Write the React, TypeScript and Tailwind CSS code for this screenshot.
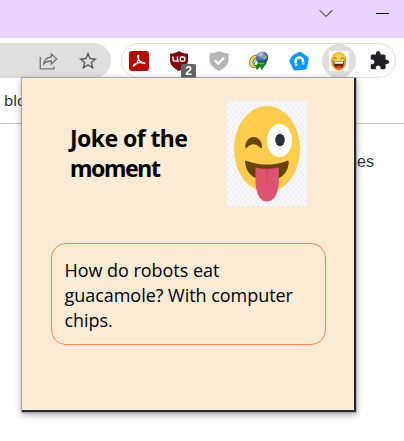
import React from "react";

function ShareIcon() {
  return (
    <svg width="20" height="20" viewBox="0 0 20 20" fill="none" stroke="#737377" strokeWidth="1.3" strokeLinejoin="miter">
      <path d="M2.3 6V17.800H16V15.500" />
      <path d="M13.300 2.900L18.600 7.900L13.300 12.900V10C9.500 10 7.500 11 5.700 13.100C6.300 9 8.900 6.200 13.300 5.800Z" />
    </svg>
  );
}

function StarIcon() {
  return (
    <svg width="22" height="22" viewBox="0 0 24 24" fill="#5f6062">
      <path d="M22 9.240l-7.190-.620L12 2 9.190 8.630 2 9.240l5.460 4.730L5.820 21 12 17.270 18.180 21l-1.630-7.030L22 9.240zM12 15.400l-3.760 2.270 1-4.280-3.320-2.880 4.380-.380L12 6.100l1.710 4.040 4.380.380-3.320 2.880 1 4.280L12 15.400z" />
    </svg>
  );
}

function PdfIcon() {
  return (
    <svg width="20" height="20" viewBox="0 0 20 20">
      <rect width="20" height="20" rx="3.200" fill="#b50b02" />
      <path d="M4.300 15.200C7.500 14 10.300 8.600 9.500 4.800C9.200 4 8.500 4.700 8.800 6C9.500 9.300 12.400 12.600 15.700 12.400C16.300 11.100 11 10.800 7 12.500C5.300 13.200 3.900 14.500 4.300 15.200Z" fill="none" stroke="#fff" strokeWidth="1.300" strokeLinejoin="round" />
    </svg>
  );
}

function BlockerIcon() {
  return (
    <svg width="20" height="20" viewBox="0 0 20 20">
      <path d="M10 0C7.500 2 4.200 2.700 1 2.800V9C1 14 4.500 17.200 10 20C15.500 17.200 19 14 19 9V2.800C15.800 2.700 12.500 2 10 0Z" fill="#800610" />
      <path d="M4 5.500V8.300Q4 10.100 5.800 10.100H8.500V5.500M8.500 10.100H10" fill="none" stroke="#fff" strokeWidth="1.400" />
      <rect x="11.200" y="6" width="4.700" height="4.200" rx="1.700" fill="none" stroke="#fff" strokeWidth="1.400" />
    </svg>
  );
}

function ShieldIcon() {
  return (
    <svg width="20" height="20" viewBox="0 0 20 20">
      <path d="M10 0C7 1.700 3.700 2.200.5 2.400V8.500C.5 13.500 4 17 10 20C16 17 19.500 13.500 19.500 8.500V2.400C16.300 2.200 13 1.700 10 0Z" fill="#b5b5b5" />
      <path d="M5.800 9.200L9.200 12.800L15 6.800" fill="none" stroke="#fff" strokeWidth="2.100" />
    </svg>
  );
}

function GlobeIcon() {
  return (
    <svg width="20" height="20" viewBox="0 0 20 20">
      <defs>
        <radialGradient id="globe" cx=".4" cy=".25" r=".8">
          <stop stopColor="#c5d4e8" />
          <stop offset=".4" stopColor="#557eba" />
          <stop offset="1" stopColor="#102b60" />
        </radialGradient>
      </defs>
      <path d="M9 4C3.500 3.500 .3 8 .7 12C1 15.500 3.800 17.300 6.500 16.500" fill="none" stroke="#e24922" strokeWidth="1.100" />
      <path d="M9 5.500C4.500 5 1.900 8.500 2.300 12C2.600 14.800 4.800 16 7 15.500" fill="none" stroke="#f2d93b" strokeWidth="1.500" />
      <path d="M9 7C5.800 6.500 3.700 9.300 4 12C4.200 14 5.800 15 7.500 14.500" fill="none" stroke="#399f3b" strokeWidth="1.400" />
      <path d="M8 9C6.500 9 5.400 11 5.600 13" fill="none" stroke="#665dad" strokeWidth="1" />
      <circle cx="13.200" cy="6.500" r="6.100" fill="url(#globe)" />
      <path d="M9 4Q11 1 14 1.500L12.500 4L9.500 5ZM13 6L17 4.500L18 7L15 9Z" fill="#d3c47a" opacity=".6" />
      <path d="M8.500 10.700L17.800 11.400L12.500 18.500L11.700 15.400C9.700 15.300 9.300 18.500 7.800 18.300C6 16 7.500 13.300 9.600 12.700Z" fill="#168b16" stroke="#0c4c12" strokeWidth=".6" />
      <path d="M9.500 11.400L16 11.800L12 13.400Z" fill="#5dcf35" />
    </svg>
  );
}

function MagnetIcon() {
  return (
    <svg width="20" height="20" viewBox="0 0 20 20">
      <path d="M9.500 1.200Q11 .200 12.600 1.400L19 6Q20 7 19.700 8.200L18 17Q17.600 18.500 16 18.700L6.500 19.500Q5 19.600 4.300 18.200L.6 11.300Q0 10 .7 8.800L4 4Z" fill="#0c98fb" />
      <path d="M7.300 14.700L6.700 10.700A3.600 3.600 0 0 1 13.800 9.300L14.500 13.500" fill="none" stroke="#fff" strokeWidth="2.400" />
      <path d="M5.700 12.900L8.500 12.500M12.800 12L15.700 11.500" stroke="#0c98fb" strokeWidth=".8" />
    </svg>
  );
}

function LaughIcon() {
  return (
    <svg width="20" height="20" viewBox="0 0 20 20">
      <defs>
        <radialGradient id="laugh" cy=".35">
          <stop offset=".4" stopColor="#ffd748" />
          <stop offset="1" stopColor="#ee9410" />
        </radialGradient>
      </defs>
      <rect width="20" height="20" fill="#f7f7f7" />
      <ellipse cx="9.800" cy="10.100" rx="7.500" ry="9.300" fill="url(#laugh)" />
      <path d="M4.700 7.700Q6.200 5.600 8 8M11.500 8Q13.200 5.600 14.800 7.700" fill="none" stroke="#8c5016" strokeWidth=".9" />
      <path d="M4.500 10.500H15Q14.800 17.500 9.800 17.600Q4.800 17.500 4.500 10.500Z" fill="#592012" />
      <path d="M5.300 10.800H14.300L13.900 12.700H5.700Z" fill="#fff" />
      <path d="M6.700 16.200Q9.800 13.400 12.800 16.200Q9.800 18.200 6.700 16.200Z" fill="#e83d3a" />
      <path d="M4.800 8.700Q2 9.500 2.500 11.200Q4 12.700 4.800 8.700M14.700 8.700Q17.500 9.500 17 11.200Q15.500 12.700 14.700 8.700" fill="#58acd3" />
    </svg>
  );
}

function PuzzleIcon() {
  return (
    <svg width="21" height="21" viewBox="0 0 24 24" fill="#202124">
      <path d="M20.500 11H19V7c0-1.100-.9-2-2-2h-4V3.500C13 2.120 11.880 1 10.500 1S8 2.120 8 3.500V5H4c-1.100 0-1.990.9-1.990 2v3.800H3.500c1.490 0 2.700 1.210 2.700 2.700s-1.210 2.700-2.700 2.700H2V20c0 1.100.9 2 2 2h3.800v-1.500c0-1.490 1.210-2.700 2.700-2.700s2.700 1.210 2.700 2.700V22H17c1.100 0 2-.9 2-2v-4h1.500c1.380 0 2.500-1.120 2.500-2.500S21.880 11 20.500 11z" />
    </svg>
  );
}

function WinkingFace() {
  return (
    <svg width="80" height="105" viewBox="0 0 80 105" className="block">
      <defs>
        <pattern id="checks" width="5" height="6" patternUnits="userSpaceOnUse">
          <rect width="5" height="6" fill="#f8f8f8" />
          <path d="M0 0H2.500V3H0ZM2.500 3H5V6H2.500Z" fill="#f1f1f3" />
        </pattern>
      </defs>
      <rect width="80" height="105" fill="url(#checks)" />
      <ellipse cx="40" cy="48" rx="33" ry="43" fill="#ffcc4d" />
      <ellipse cx="52.500" cy="39.500" rx="12.500" ry="16.500" fill="#fff" />
      <ellipse cx="53" cy="39" rx="4.700" ry="6.200" fill="#292f33" />
      <path d="M18.500 47C17.500 42 21 36 26.500 36C32 36 36 42 34.800 47C34 48.800 31.500 43.200 26.500 43.200C21.500 43.200 19.200 48.800 18.500 47Z" fill="#664500" />
      <path d="M18 61C18 59.500 19 59.500 21 60.200C33 64.700 47 64.700 59 60.200C61 59.500 62 59.800 61.700 62C60.500 75 51 79.500 40 79.500C29 79.500 19 74 18 61Z" fill="#664500" />
      <path d="M28.500 66.500C36 68.200 44 68.200 51.800 66.500V80C51.800 89 48.500 100.500 40 100.500C31.500 100.500 28.500 89 28.500 80Z" fill="#dd5471" />
      <path d="M39.500 68H41L40.500 83H39.900Z" fill="#c94868" />
    </svg>
  );
}

function Extensions() {
  const slot = "flex size-6 shrink-0 items-center justify-center";
  return (
    <div className="ml-2.5 flex h-[35px] w-[275px] items-center gap-4 rounded-full border border-[#dedee0] bg-white pl-[5px]">
      <div className={slot}><PdfIcon /></div>
      <div className={slot + " relative"}>
        <BlockerIcon />
        <span className="absolute top-[15px] left-[14px] flex h-[15px] w-[15px] items-center justify-center rounded-[2px] bg-[#626466] font-['Liberation_Sans',sans-serif] text-[12px] font-bold text-white">2</span>
      </div>
      <div className={slot}><ShieldIcon /></div>
      <div className={slot}><GlobeIcon /></div>
      <div className={slot}><MagnetIcon /></div>
      <div className="-mx-[5px] flex size-[34px] shrink-0 items-center justify-center rounded-full bg-[#dfdfdf]"><LaughIcon /></div>
      <div className={slot}><PuzzleIcon /></div>
    </div>
  );
}

function JokePopup() {
  return (
    <section className="absolute top-[78px] left-[22px] h-[334px] w-[334px] border-r-2 border-b-2 border-[#292b34] bg-[#faebd7] pr-7 pl-[29px] font-['Noto_Sans','Open_Sans',sans-serif] text-black shadow-[0_0_0_1px_#999999aa,0_2px_7px_#00000070]">
      <header className="flex pt-[23px] pl-[19px]">
        <h1 className="mt-[22px] w-[157px] text-[23px] leading-[30px] font-bold tracking-[-0.6px]">
          Joke of the<br /><span className="tracking-[-1.4px]">moment</span>
        </h1>
        <WinkingFace />
      </header>
      <p className="mt-[37px] h-[102px] w-[275px] rounded-[15px] border border-[#ff8559] pt-[14px] pl-[12.5px] font-['Open_Sans',sans-serif] text-[18px] leading-[25px] tracking-[-0.04px] whitespace-nowrap">
        How do robots eat<br />guacamole? With computer<br />chips.
      </p>
    </section>
  );
}

export default function App() {
  return (
    <main className="relative h-[441px] w-[404px] overflow-hidden bg-white">
      <div className="flex h-[38px] items-start justify-end gap-[43px] bg-[#e8d3ff] pt-[9px] pr-[15px]">
        <svg width="14" height="9" viewBox="0 0 14 9" fill="none" stroke="#111" strokeWidth="1"><path d="M.7 1.200L7 7.500L13.300 1.200" /></svg>
        <div className="mt-1 h-px w-[13px] bg-black" />
      </div>
      <div className="flex pt-[5px]">
        <div className="flex h-[35px] w-[111px] items-center gap-[19px] rounded-r-full bg-[#dfdfdf] pl-[38px]">
          <ShareIcon />
          <StarIcon />
        </div>
        <Extensions />
      </div>
      <div className="h-[46px] border-b border-[#c9c9c9] pt-[11px] pl-1 font-['Open_Sans',sans-serif] text-[15px] leading-[22px] text-[#202124]">blog</div>
      <div className="mt-[28px] pr-[30px] text-right font-['Liberation_Sans',sans-serif] text-[16px] leading-[20px] text-[#303134]">Images</div>
      <JokePopup />
    </main>
  );
}
